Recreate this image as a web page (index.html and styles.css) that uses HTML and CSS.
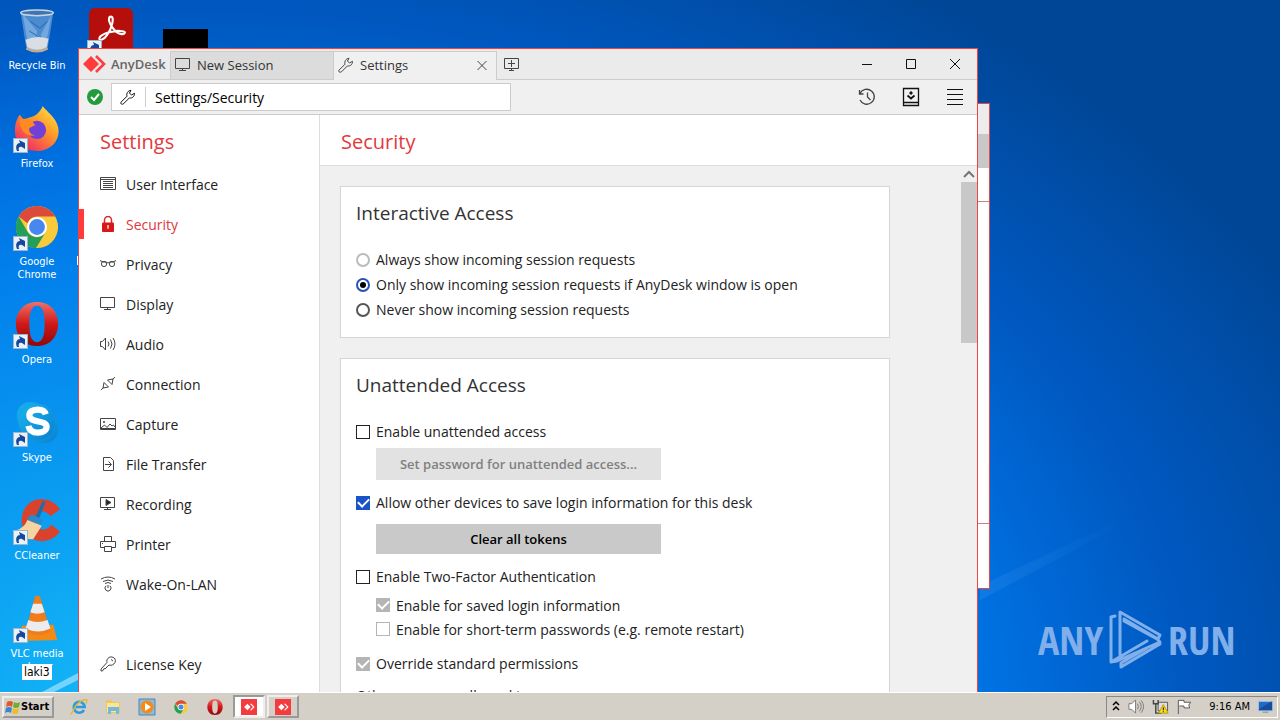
FILE: index.html
```html
<!DOCTYPE html>
<html lang="en">
<head>
<meta charset="utf-8">
<title>AnyDesk Settings</title>
<link rel="stylesheet" href="styles.css">
</head>
<body>
<svg class="defs" aria-hidden="true">
  <defs>
    <symbol id="monitor" viewBox="0 0 16 16"><path d="M.5 1.500h14v10H.5zM7.500 12v1M4 13.500h7"/></symbol>
    <symbol id="wrench" viewBox="0 0 16 16"><path d="M1 13.200 7 7.200C6.200 4.500 7.800 1.600 11 1.300l-1.600 2.900 2.200 1.700 2.900-1.600c.2 3-2.200 5.200-5.100 4.600l-6 6c-1.600 1.100-3.300-.4-2.400-1.700z"/></symbol>
    <symbol id="shortcut" viewBox="0 0 15 15"><rect x=".5" y=".5" width="14" height="14" fill="#e9f1f8" stroke="#9fb4c8"/><path d="M4 13C2 8 4 5 7 5L6 2l6 3 0 6-3-2C6 8 5 10 6 13z" fill="#15489a"/></symbol>
    <symbol id="anydesk" viewBox="0 0 20 20"><rect width="20" height="20" fill="#f43b3d"/><path d="m8 6 4 4-4 4-4-4zM11 6h2l4 4-4 4h-2l4-4z" fill="#fff"/></symbol>
    <symbol id="chrome" viewBox="0 0 46 46"><circle cx="23" cy="23" r="22" fill="#f9cb3a"/><path d="M3.900 12A22 22 0 0 1 42 12H23a11 11 0 0 0-10 7z" fill="#dc4a3c"/><path d="M3.900 12A22 22 0 0 0 22 45l10-16.500a11 11 0 0 1-18.600 0z" fill="#22a05a"/><circle cx="23" cy="23" r="10.500" fill="#fff"/><circle cx="23" cy="23" r="8.300" fill="#4688f0"/></symbol>
    <linearGradient id="op" x2="0" y2="1"><stop stop-color="#f07068"/><stop offset=".5" stop-color="#d01818"/><stop offset="1" stop-color="#900808"/></linearGradient>
    <symbol id="opera" viewBox="0 0 46 46"><path fill-rule="evenodd" fill="url(#op)" d="M23 0C9 0 1 10 1 23s8 23 22 23 22-10 22-23S37 0 23 0zm0 4c6 0 8 8 8 19s-2 19-8 19-8-8-8-19 2-19 8-19z"/></symbol>
  </defs>
</svg>

<main class="desktop">
  <svg class="beams" viewBox="0 0 1280 692" preserveAspectRatio="none" aria-hidden="true">
    <defs><linearGradient id="beam" x1="0" x2="1"><stop stop-color="#4da2f5" stop-opacity=".2"/><stop offset="1" stop-color="#4da2f5" stop-opacity="0"/></linearGradient></defs>
    <path d="M42 692 78 673v7L54 692z" fill="#8edcff" opacity=".8"/>
    <path d="M980 586 1120 520 1120 526 980 600z" fill="url(#beam)"/>
    <path d="M77 256h1v9h-1z" fill="#fff"/>
  </svg>

  <ul class="icons">
    <li class="shortcut">
      <svg class="art" viewBox="0 0 48 48"><path d="m7 5 6 38q11 6 22 0l6-38z" fill="#4c8bd0"/><path d="M9 6 15 40l7 4 2-20zM39 7 28 28l5 12z" fill="#8bbcea" opacity=".6"/><path d="m12 33 2 9q10 6 20 0l2-10q-12-4-24 1z" fill="#d9dde4"/><ellipse cx="24" cy="5" rx="17" ry="3" fill="#4274ad" stroke="#c5d5e5" stroke-width="1.500"/><path d="M13 42q11 6 22 0" fill="none" stroke="#b8ac9f" stroke-width="3"/><path d="m17 14 10 7 8-7M16 24l8 5" fill="none" stroke="#2a62a8"/></svg>
      <span>Recycle Bin</span>
    </li>
    <li class="shortcut">
      <svg class="art" viewBox="0 0 48 48"><defs><linearGradient id="ff" x1="1" x2=".2" y2="1"><stop stop-color="#fff04a"/><stop offset=".45" stop-color="#ff9a28"/><stop offset="1" stop-color="#f0206a"/></linearGradient></defs><path d="M30 0c4 6 14 12 16 22 3 14-8 25-22 25S0 38 1 24c0-6 2-11 5-15l4 5 6-2c6-1 11-5 14-12z" fill="url(#ff)"/><circle cx="24" cy="25" r="9.500" fill="#7040d8"/><path d="M6 14c7-2 13 0 16 6l-6 3c-1 4 2 7 6 8-10 1-16-6-16-17z" fill="#ff8a22"/></svg>
      <svg class="arrow"><use href="#shortcut"/></svg>
      <span>Firefox</span>
    </li>
    <li class="shortcut">
      <svg class="art" viewBox="0 0 48 48"><use href="#chrome" x="1" y="1" width="46" height="46"/></svg>
      <svg class="arrow"><use href="#shortcut"/></svg>
      <span>Google Chrome</span>
    </li>
    <li class="shortcut">
      <svg class="art" viewBox="0 0 48 48"><use href="#opera" x="1" y="0" width="46" height="46"/></svg>
      <svg class="arrow"><use href="#shortcut"/></svg>
      <span>Opera</span>
    </li>
    <li class="shortcut">
      <svg class="art" viewBox="0 0 48 48"><defs><linearGradient id="sk" x2="1" y2="1"><stop stop-color="#19b5ee"/><stop offset="1" stop-color="#087fd0"/></linearGradient></defs><rect x="3" y="2" width="30" height="30" rx="14" fill="url(#sk)"/><rect x="15" y="14" width="31" height="31" rx="14" fill="url(#sk)"/><circle cx="24" cy="23" r="19" fill="url(#sk)"/><path d="M33 15c-1-4-5-5-8-5-5 0-9 2-9 6 0 9 18 4 18 12 0 4-4 6-9 6s-9-2-10-7" fill="none" stroke="#fff" stroke-width="6.500"/></svg>
      <svg class="arrow"><use href="#shortcut"/></svg>
      <span>Skype</span>
    </li>
    <li class="shortcut">
      <svg class="art" viewBox="0 0 48 48"><path d="M48 12C38-5 9-3 8 23c0 24 28 29 40 12l-9-7c-6 8-17 6-17-5 0-10 11-12 16-4z" fill="#d9432e"/><path d="m30 3 3 1-7 18-4-2z" fill="#1b6fae"/><path d="M14 22q2-5 7-4l9 5-2 5-14-5z" fill="#2b8acb"/><path d="m14 23 15 6-9 14Q8 44 2 34q9-3 12-11z" fill="#f4d4a0"/></svg>
      <svg class="arrow"><use href="#shortcut"/></svg>
      <span>CCleaner</span>
    </li>
    <li class="shortcut">
      <svg class="art" viewBox="0 0 48 48"><path d="m8 31 33-1 4 16-37 1z" fill="#f48a16"/><path d="m22 0h5l11 37q-12 8-26 0z" fill="#f07c1c"/><path d="m20 8h9l3 9q-8 3-15 0zM15 25q9 4 20 0l3 9q-13 6-26 0z" fill="#ebecef"/></svg>
      <svg class="arrow"><use href="#shortcut"/></svg>
      <span>VLC media player</span>
    </li>
    <li class="shortcut">
      <svg class="art" viewBox="0 0 48 48"><rect x="1" y="0" width="46" height="47" rx="6" fill="#b50f0b"/><path d="M24 9c4 0 1 12-4 19-4 6-9 7-8 3 2-4 15-8 22-7 7 0 5 4 0 3-6-1-13-12-12-16 0-1 1-2 2-2z" fill="none" stroke="#fff" stroke-width="2.200"/></svg>
      <svg class="arrow"><use href="#shortcut"/></svg>
    </li>
    <li class="shortcut shortcut-third"><svg class="art" viewBox="0 0 48 48"><path d="M1 22h47v26H1z"/></svg></li>
  </ul>
  <span class="tooltip">laki3</span>

  <svg class="watermark" viewBox="0 0 194 64" role="img" aria-label="ANY RUN">
    <text x="0" y="47" class="mark">ANY</text><text x="130" y="47" class="mark">RUN</text>
    <path d="M82 47V4l40 23-2 4-34-20M77 8l-4 1v45l6-1 43-19-3-3-33-18M83 59l39-23M73 54l36-21M83 59v-4l26-15" fill="none" stroke="#80afea" stroke-width="3" stroke-linecap="round" stroke-linejoin="round"/>
  </svg>

  <section class="back-window" aria-hidden="true">
    <div class="back-title"></div><div class="back-tabs"></div><div class="back-bar"></div><div class="back-body"></div><div class="back-foot"></div>
  </section>

  <section class="window">
    <header class="titlebar">
      <div class="brand"><svg viewBox="0 0 24 18" width="24" height="18"><path d="m9 1 8 8-8 8-8-8z" fill="#ff3b3b"/><path d="m14 1 8 8-8 8" fill="none" stroke="#ff3b3b" stroke-width="2.600"/></svg><b>AnyDesk</b></div>
      <button class="tab"><svg class="line"><use href="#monitor"/></svg>New Session</button>
      <div class="tab tab-active"><svg class="line"><use href="#wrench"/></svg><span>Settings</span><button class="plain" aria-label="Close tab"><svg class="line" viewBox="0 0 16 16"><path d="m3.500 4 9 9m0-9-9 9"/></svg></button></div>
      <button class="plain add" aria-label="New tab"><svg class="line" viewBox="0 0 16 16"><path d="M.5 2.500h14v10H.5zM7.500 4v7M4 7.500h7M7.500 13v2M5 14.500h5"/></svg></button>
      <div class="controls">
        <button class="plain" aria-label="Minimize"><svg class="line dark" viewBox="0 0 16 16"><path d="M3 8.500h10"/></svg></button>
        <button class="plain" aria-label="Maximize"><svg class="line dark" viewBox="0 0 16 16"><path d="M3.500 3.500h9v9h-9z"/></svg></button>
        <button class="plain" aria-label="Close"><svg class="line dark" viewBox="0 0 16 16"><path d="m3 3 10 10M13 3 3 13"/></svg></button>
      </div>
    </header>
    <div class="toolbar">
      <svg class="status" viewBox="0 0 16 16"><circle cx="8" cy="8" r="8" fill="#239b3c"/><path d="m4 8 3 3 5-6" fill="none" stroke="#fff" stroke-width="2"/></svg>
      <label class="address"><svg class="line dark"><use href="#wrench"/></svg><input type="text" value="Settings/Security" aria-label="Address"></label>
      <div class="controls">
        <button class="plain" aria-label="History"><svg class="line" viewBox="0 0 18 20"><path d="M2 6.500A7.500 7.500 0 1 1 2 13M1.500 3v4h4M9.500 5.500V10l3 3" stroke-width="1.300"/></svg></button>
        <button class="plain" aria-label="Address book"><svg class="line dark" viewBox="0 0 18 20"><path d="M1.500 1.500h15v17h-15zM2 15.500h14" stroke-width="1.300"/><path d="M5.500 8.500 9 11.500l3.500-3" stroke-width="1.800"/><circle cx="9" cy="6" r="1.200" fill="#222"/></svg></button>
        <button class="plain" aria-label="Menu"><svg class="line dark" viewBox="0 0 18 20"><path d="M1 2.500h16M1 7.500h16M1 12.500h16M1 17.500h16"/></svg></button>
      </div>
    </div>
    <div class="body">
      <nav class="sidebar">
        <h1>Settings</h1>
        <a href="#ui"><svg class="line" viewBox="0 0 16 16"><path d="M.5 1.500h15v12H.5zM1 3.500h14M3 5.500h10M3 7.500h10M3 9.500h10M3 11.500h10"/></svg>User Interface</a>
        <a href="#security" class="current"><svg viewBox="0 0 16 16"><path d="M4.500 8V4a3.500 3.500 0 0 1 7 0v4" fill="none" stroke="#d8282c" stroke-width="1.500"/><rect x="2" y="6.500" width="12" height="9.500" rx="1" fill="#d8171c"/><path d="M7 10a1 1 0 0 1 2 0l-.5 3h-1z" fill="#ffd0b0"/></svg>Security</a>
        <a href="#privacy"><svg class="line" viewBox="0 0 16 16"><path d="M0 4.500 3 6h3l2 1 2-1h3l3-1.500"/><circle cx="4" cy="8" r="2.600"/><circle cx="12" cy="8" r="2.600"/></svg>Privacy</a>
        <a href="#display"><svg class="line"><use href="#monitor"/></svg>Display</a>
        <a href="#audio"><svg class="line" viewBox="0 0 16 16"><path d="M.5 5.500h2l3-3.500v12l-3-3.500h-2zM8 5.500q2 2.500 0 5M10.500 3.500q3 4.500 0 9M13 2q4 6 0 12"/></svg>Audio</a>
        <a href="#connection"><svg class="line" viewBox="0 0 16 16"><path d="m1 14 2.500-2.500M4 6.500 3 12l5.500-1zM15 1l-2.500 2.500M7.500 4l5.500-1-1 5.500z"/></svg>Connection</a>
        <a href="#capture"><svg class="line" viewBox="0 0 16 16"><path d="M.5 2.500h15v11H.5zM1 12l3.500-3L7 11.500 10 8l2 2 1.500-1L15 11M1 12.500h14"/><circle cx="4" cy="6" r=".7"/></svg>Capture</a>
        <a href="#transfer"><svg class="line" viewBox="0 0 16 16"><path d="M3.500 1.500h7l3 3v10h-10zM5 8.500h6M8.500 5.500l3 3-3 3"/></svg>File Transfer</a>
        <a href="#recording"><svg class="line" viewBox="0 0 16 16"><path d="M.5 1.500h14v10H.5zM7.500 12v1M4 13.500h7"/><path d="m6 3.500 5 3-5 3z" fill="#222"/></svg>Recording</a>
        <a href="#printer"><svg class="line" viewBox="0 0 16 16"><path d="M4.500 5.500v-5h7v5M4 11.500H.5v-6h15v6H12M4.500 10.500h7v5h-7zM2 7.500h1"/></svg>Printer</a>
        <a href="#wol"><svg class="line" viewBox="0 0 16 16"><path d="M1 3q7-4 14 0M3 5.500q5-3 10 0M5 7.500q3-2 6 0M6 9.800a3 3 0 1 0 4 0M8 9v3"/></svg>Wake-On-LAN</a>
        <a href="#license" class="license"><svg class="line" viewBox="0 0 16 16"><path d="M7 6.500C6 3 9 .5 12 1c3 .5 4 3 3 5.500-1 2-3.500 3.500-6 2.500l-4 4-1-.5L2.500 15H1v-2z"/><path d="M11 3.500 13 5"/></svg>License Key</a>
      </nav>
      <div class="main">
        <h1 class="page-title">Security</h1>
        <div class="scroller">
          <div class="cards">
            <fieldset class="card">
              <legend>Interactive Access</legend>
              <label class="option faint"><input type="radio" name="access">Always show incoming session requests</label>
              <label class="option"><input type="radio" name="access" checked>Only show incoming session requests if AnyDesk window is open</label>
              <label class="option"><input type="radio" name="access">Never show incoming session requests</label>
            </fieldset>
            <fieldset class="card">
              <legend>Unattended Access</legend>
              <label class="option"><input type="checkbox">Enable unattended access</label>
              <button class="action" disabled>Set password for unattended access...</button>
              <label class="option"><input type="checkbox" checked>Allow other devices to save login information for this desk</label>
              <button class="action">Clear all tokens</button>
              <label class="option"><input type="checkbox">Enable Two-Factor Authentication</label>
              <div class="nested">
                <label class="option"><input type="checkbox" checked disabled>Enable for saved login information</label>
                <label class="option"><input type="checkbox" disabled>Enable for short-term passwords (e.g. remote restart)</label>
              </div>
              <label class="option"><input type="checkbox" checked disabled>Override standard permissions</label>
              <p class="note">Other users are allowed to</p>
            </fieldset>
          </div>
          <div class="scrollbar" aria-hidden="true"><svg viewBox="0 0 16 16"><path d="m3 11 5-5 5 5" fill="none" stroke="#777" stroke-width="2"/></svg><div class="thumb"></div></div>
        </div>
      </div>
    </div>
  </section>
</main>

<footer class="taskbar">
  <button class="start"><svg viewBox="0 0 16 16"><path d="M2 3q3-2 6 0L7 8Q4 6 1 8z" fill="#e4572a"/><path d="M9 3q3 2 6 0l-1 5q-3 2-6 0z" fill="#6cae38"/><path d="M1 9q3-2 6 0l-1 5q-3-2-6 0z" fill="#3b84cf"/><path d="M8 9q3 2 6 0l-1 5q-3 2-6 0z" fill="#f2bb24"/></svg>Start</button>
  <nav class="quick">
    <button class="plain" aria-label="Internet Explorer"><svg viewBox="0 0 18 18"><path d="M14 12a5.500 5.500 0 1 1 .7-3H5" fill="none" stroke="#2e9be0" stroke-width="2.600"/><path d="M2 15Q-1 18 4 12M3 12Q9 2 16 1.500q2 0 0 4" fill="none" stroke="#e5b632" stroke-width="1.300"/></svg></button>
    <button class="plain" aria-label="Explorer"><svg viewBox="0 0 18 18"><path d="M2 2h5l1 2h8v11H2z" fill="#eec85a"/><path d="M3 5h12v9H3z" fill="#f8e5a0"/><path d="M4 9h11v7h-3v-3H7v3H4z" fill="#75b8de"/></svg></button>
    <button class="plain" aria-label="Media Player"><svg viewBox="0 0 18 18"><path d="M1 1h16v16H1z" fill="#8db9dc" stroke="#4d87b6"/><circle cx="9" cy="9" r="6.500" fill="#f38b16"/><path d="m7 5 6 4-6 4z" fill="#fff"/></svg></button>
    <button class="plain" aria-label="Chrome"><svg><use href="#chrome" x="2" y="2" width="14" height="14"/></svg></button>
    <button class="plain" aria-label="Opera"><svg><use href="#opera" x="1" y="1" width="16" height="16"/></svg></button>
  </nav>
  <button class="task task-active" aria-label="AnyDesk"><svg><use href="#anydesk"/></svg></button>
  <button class="task" aria-label="AnyDesk session"><svg><use href="#anydesk"/></svg></button>
  <div class="tray">
    <svg viewBox="0 0 10 16"><path d="m2 6 3-3 3 3M2 11l3-3 3 3" fill="none" stroke="#000" stroke-width="1.500"/></svg>
    <svg class="wide" viewBox="0 0 18 18"><path d="M1 6h3l4-4v14l-4-4H1z" fill="#fff" stroke="#777"/><path d="M10 6q2 3 0 6M12 4q4 5 0 10M14 2.500q5 6.500 0 13" fill="none" stroke="#777"/></svg>
    <svg class="wide" viewBox="0 0 18 18"><path d="M6.500 4.500h10v9h-10z" fill="#ddd" stroke="#555"/><path d="M1.500 2v4h5V2M4 6v10h6" fill="none" stroke="#444" stroke-width="1.500"/><path d="m12 7 5 9H7z" fill="#ffdc20" stroke="#b69a00"/><path d="M12 10v3M12 14v1" stroke="#000"/></svg>
    <svg class="wide flag" viewBox="0 0 18 18"><path d="M2.500 17V2.500h6v2h7l-2 3 1 3H8.500v-2h-5" fill="#fff" stroke="#555"/></svg>
    <time>9:16 AM</time>
    <svg class="wide" viewBox="0 0 18 18"><path d="M1.500 3.500h15v10h-15z" fill="#2469c6" stroke="#a7c9e8"/><path d="m2 12 13-8h1v9H2z" fill="#174b9e"/><path d="M6 15h6" stroke="#888"/></svg>
  </div>
</footer>
</body>
</html>
```
FILE: styles.css
```css
* { box-sizing: border-box; }
body {
  margin: 0;
  height: 100vh;
  display: flex;
  flex-direction: column;
  overflow: hidden;
  font-family: "Open Sans", "Noto Sans", sans-serif;
  font-size: 14px;
  color: #222;
}
h1, p, ul, fieldset { margin: 0; padding: 0; border: 0; font-weight: 400; }
button, input { font: inherit; color: inherit; }
svg { flex: none; width: 16px; height: 16px; }
.defs { position: absolute; width: 0; height: 0; }
.plain { border: 0; padding: 0; background: none; display: flex; }
.line { fill: none; stroke: #444; stroke-width: 1; }
.dark { stroke: #111; }

.desktop {
  flex: 1;
  min-height: 0;
  position: relative;
  overflow: hidden;
  background: radial-gradient(ellipse 1180px 840px at 200px 720px, #18c0f8 0%, #0ba0f2 26%, #0280ec 55%, #0070e0 68%, #0058c0 84%, #004696 106%);
}
.beams { position: absolute; width: 100%; height: 100%; }
.icons {
  position: absolute;
  top: 8px;
  left: 0;
  list-style: none;
  display: grid;
  grid-auto-flow: column;
  grid-template-rows: repeat(7, 98px);
  grid-auto-columns: 74px;
}
.shortcut {
  position: relative;
  display: flex;
  flex-direction: column;
  align-items: center;
  gap: 5px;
  padding: 0 6px;
  color: #fff;
  font: 11px/13px "DejaVu Sans Condensed", sans-serif;
  text-align: center;
}
.shortcut-third { grid-column: 3; grid-row: 1; }
.art { width: 46px; height: 46px; }
.shortcut .arrow { position: absolute; left: 13px; top: 32px; width: 15px; height: 15px; }
.tooltip {
  position: absolute;
  left: 22px;
  top: 664px;
  padding: 0 2px;
  background: #fff;
  color: #000;
  font: 12px/16px "DejaVu Sans Condensed", sans-serif;
}
.watermark { position: absolute; right: 48px; bottom: 20px; width: 194px; height: 64px; overflow: visible; }
.mark { font: 300 40px "Open Sans Condensed", "Liberation Sans Narrow", sans-serif; fill: #80afea; }

.back-window {
  position: absolute;
  left: 600px;
  top: 103px;
  width: 390px;
  height: 486px;
  display: flex;
  flex-direction: column;
  border: 1px solid #f04444;
  background: #fff;
}
.back-title { height: 30px; background: #ececec; }
.back-tabs { height: 34px; background: #c8c8c8; }
.back-bar { height: 34px; border-bottom: 1px solid #c98080; }
.back-body { flex: 1; }
.back-foot { height: 65px; border-top: 1px solid #c98080; }

.window {
  position: absolute;
  left: 78px;
  top: 48px;
  bottom: 0;
  width: 900px;
  display: flex;
  flex-direction: column;
  border: 1px solid #f04444;
  border-bottom: 0;
  background: #fff;
}
.titlebar { height: 31px; display: flex; align-items: stretch; padding-top: 2px; background: #ebebeb; border-bottom: 1px solid #ccc; }
.brand { width: 91px; display: flex; align-items: center; gap: 5px; padding: 0 0 2px 3px; color: #666; font-size: 13px; }
.brand b { font-weight: 600; }
.brand svg { width: 24px; height: 18px; }
.tab { width: 163px; display: flex; align-items: center; gap: 6px; padding: 0 6px 1px 4px; border: 1px solid #ccc; border-right: 0; border-bottom: 0; background: #dcdcdc; font-size: 13px; color: #333; }
.tab-active { width: 164px; margin-bottom: -1px; padding-bottom: 2px; background: #f0f0f0; border-right: 1px solid #ccc; }
.tab-active span { flex: 1; }
.add { align-items: center; margin-left: 7px; padding-bottom: 2px; }
.controls { display: flex; align-items: center; gap: 28px; margin-left: auto; padding: 0 14px 2px 0; }
.toolbar { height: 35px; display: flex; align-items: center; background: #f0f0f0; border-bottom: 1px solid #ccc; }
.status { margin: 0 8px; }
.address { width: 400px; height: 28px; display: flex; align-items: center; gap: 9px; padding: 3px 8px; border: 1px solid #ccc; background: #fff; }
.address input { flex: 1; min-width: 0; height: 20px; padding: 0 9px; border: 0; border-left: 1px solid #ccc; outline: 0; color: #000; background: none; }
.toolbar .controls { gap: 26px; padding: 0 13px 0 0; }
.toolbar .controls svg { width: 18px; height: 20px; }

.body { flex: 1; min-height: 0; display: flex; }
.sidebar { width: 241px; border-right: 1px solid #ddd; overflow: hidden; }
.sidebar h1, .page-title { color: #e4393c; font-size: 20px; line-height: 54px; }
.sidebar h1 { height: 49px; padding-left: 21px; }
.sidebar a { height: 40px; display: flex; align-items: center; gap: 10px; padding-left: 21px; color: #222; text-decoration: none; }
.sidebar .current { height: 30px; margin: 5px 0; padding-left: 16px; border-left: 5px solid #ff3b3b; color: #e0383c; }
.sidebar .license { margin-top: 40px; }
.main { flex: 1; min-width: 0; display: flex; flex-direction: column; }
.page-title { height: 51px; padding-left: 21px; border-bottom: 1px solid #ddd; }
.scroller { flex: 1; min-height: 0; display: flex; justify-content: space-between; overflow: hidden; background: #f0f0f0; }
.cards { width: 570px; padding: 20px 0 0 20px; }
.card { margin-bottom: 20px; padding: 12px 15px 15px; border: 1px solid #d5d5d5; background: #fff; }
.card legend { float: left; width: 100%; padding: 0; margin-bottom: 20px; color: #333; font-size: 19px; line-height: 28px; }
.option { clear: both; display: flex; align-items: center; gap: 6px; height: 25px; }
.option input { flex: none; appearance: none; width: 14px; height: 14px; margin: 0; border: 1px solid #222; background: #fff; display: grid; place-items: center; }
.option input[type="radio"] { border: 2px solid #555; border-radius: 50%; }
.faint input[type="radio"] { border-color: #bbb; }
.option input[type="radio"]:checked { border-color: #2454b5; }
.option input[type="radio"]:checked::after { content: ""; width: 6px; height: 6px; border-radius: 50%; background: #000; }
.option input[type="checkbox"]:checked { background: #1a53c8; border-color: #1a53c8; }
.option input[type="checkbox"]:checked::after { content: ""; width: 9px; height: 5px; margin-bottom: 3px; border: solid #fff; border-width: 0 0 2px 2px; rotate: -45deg; }
.option input[type="checkbox"]:disabled { border-color: #b5b5b5; }
.option input[type="checkbox"]:disabled:checked { background: #b5b5b5; }
.action { display: block; width: 285px; height: 30px; margin: 9px 0 10px 20px; padding: 0; border: 0; background: #c9c9c9; color: #000; font-size: 13px; font-weight: 600; }
.action:disabled { height: 32px; margin: 4px 0 10px 20px; background: #e2e2e2; color: #808080; }
.nested { padding: 4px 0 10px 20px; }
.nested .option { height: 24px; }
.note { line-height: 20px; padding-top: 10px; }
.scrollbar { width: 16px; background: #f0f0f0; }
.scrollbar svg { display: block; }
.thumb { height: 161px; background: #c8c8c8; }

.taskbar { height: 28px; display: flex; align-items: center; padding: 1px 2px; border-top: 1px solid #fff; background: #d4d0c8; font: 12px "DejaVu Sans Condensed", sans-serif; color: #000; }
.start { width: 52px; height: 22px; display: flex; align-items: center; gap: 0; padding: 0 1px; border: 2px outset #eee; background: #d4d0c8; font-size: 11px; font-weight: 700; }
.quick { display: flex; gap: 16px; padding: 0 9px 0 16px; }
.quick svg { width: 18px; height: 18px; }
.task { width: 32px; height: 23px; display: grid; place-items: center; margin-right: 2px; padding: 0; border: 2px outset #eee; background: #d4d0c8; }
.task svg { width: 16px; height: 16px; }
.task-active { border-style: inset; background: #fff; }
.tray { height: 22px; display: flex; align-items: center; gap: 7px; margin-left: auto; padding: 0 3px 0 4px; border: 1px solid; border-color: #888 #fff #fff #888; font-size: 11px; }
.tray svg { width: 10px; }
.tray .wide { width: 17px; height: 17px; }
.tray .flag { margin-right: 9px; }
```
